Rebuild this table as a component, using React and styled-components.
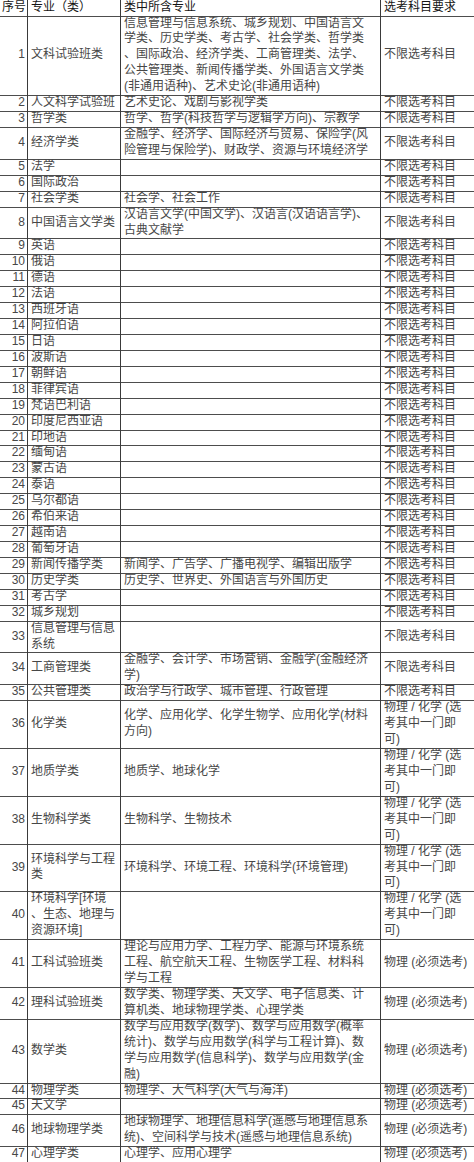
import styled, { createGlobalStyle } from "styled-components";

const LINE = 15.93;

const GlobalStyle = createGlobalStyle`
  html, body {
    margin: 0;
    padding: 0;
    background: #ffffff;
  }
  body {
    font-family: "Liberation Sans", "Noto Sans CJK SC", sans-serif;
    overflow: hidden;
  }
`;

const Sheet = styled.div`
  width: 474px;
  margin-top: -0.4px;
  display: flex;
  flex-direction: column;
`;

const Row = styled.div`
  display: grid;
  grid-template-columns: 28px 93px 260px 1fr;
  height: ${(p) => p.$h}px;
`;

const Cell = styled.div`
  box-sizing: border-box;
  display: flex;
  align-items: center;
  justify-content: ${(p) => (p.$num ? "flex-end" : "flex-start")};
  padding: ${(p) => (p.$num ? "0 2px 0 0" : "0 0 0 3px")};
  border-bottom: 1px solid #4d4d4d;
  border-right: ${(p) => (p.$last ? "none" : "1px solid #3a3a3a")};
  font-size: 12px;
  line-height: ${LINE}px;
  color: ${(p) => (p.$head ? "#151515" : "#474747")};
  white-space: nowrap;
  overflow: visible;
`;

const Text = styled.span`
  display: block;
`;

const ANY = "不限选考科目";
const PC = ["物理 / 化学 (选", "考其中一门即", "可)"];
const PHY = "物理 (必须选考)";

const rows = [
  [1, ["文科试验班类"], [
    "信息管理与信息系统、城乡规划、中国语言文",
    "学类、历史学类、考古学、社会学类、哲学类",
    "、国际政治、经济学类、工商管理类、法学、",
    "公共管理类、新闻传播学类、外国语言文学类",
    "(非通用语种)、艺术史论(非通用语种)",
  ], [ANY], 5],
  [2, ["人文科学试验班"], ["艺术史论、戏剧与影视学类"], [ANY], 1],
  [3, ["哲学类"], ["哲学、哲学(科技哲学与逻辑学方向)、宗教学"], [ANY], 1],
  [4, ["经济学类"], [
    "金融学、经济学、国际经济与贸易、保险学(风",
    "险管理与保险学)、财政学、资源与环境经济学",
  ], [ANY], 2],
  [5, ["法学"], [], [ANY], 1],
  [6, ["国际政治"], [], [ANY], 1],
  [7, ["社会学类"], ["社会学、社会工作"], [ANY], 1],
  [8, ["中国语言文学类"], [
    "汉语言文学(中国文学)、汉语言(汉语语言学)、",
    "古典文献学",
  ], [ANY], 2],
  ...[
    "英语", "俄语", "德语", "法语", "西班牙语", "阿拉伯语", "日语", "波斯语",
    "朝鲜语", "菲律宾语", "梵语巴利语", "印度尼西亚语", "印地语", "缅甸语",
    "蒙古语", "泰语", "乌尔都语", "希伯来语", "越南语", "葡萄牙语",
  ].map((name, i) => [9 + i, [name], [], [ANY], 1]),
  [29, ["新闻传播学类"], ["新闻学、广告学、广播电视学、编辑出版学"], [ANY], 1],
  [30, ["历史学类"], ["历史学、世界史、外国语言与外国历史"], [ANY], 1],
  [31, ["考古学"], [], [ANY], 1],
  [32, ["城乡规划"], [], [ANY], 1],
  [33, ["信息管理与信息", "系统"], [], [ANY], 2],
  [34, ["工商管理类"], ["金融学、会计学、市场营销、金融学(金融经济", "学)"], [ANY], 2],
  [35, ["公共管理类"], ["政治学与行政学、城市管理、行政管理"], [ANY], 1],
  [36, ["化学类"], ["化学、应用化学、化学生物学、应用化学(材料", "方向)"], PC, 3],
  [37, ["地质学类"], ["地质学、地球化学"], PC, 3],
  [38, ["生物科学类"], ["生物科学、生物技术"], PC, 3],
  [39, ["环境科学与工程", "类"], ["环境科学、环境工程、环境科学(环境管理)"], PC, 3],
  [40, ["环境科学[环境", "、生态、地理与", "资源环境]"], [], PC, 3],
  [41, ["工科试验班类"], [
    "理论与应用力学、工程力学、能源与环境系统",
    "工程、航空航天工程、生物医学工程、材料科",
    "学与工程",
  ], [PHY], 3],
  [42, ["理科试验班类"], [
    "数学类、物理学类、天文学、电子信息类、计",
    "算机类、地球物理学类、心理学类",
  ], [PHY], 2],
  [43, ["数学类"], [
    "数学与应用数学(数学)、数学与应用数学(概率",
    "统计)、数学与应用数学(科学与工程计算)、数",
    "学与应用数学(信息科学)、数学与应用数学(金",
    "融)",
  ], [PHY], 4],
  [44, ["物理学类"], ["物理学、大气科学(大气与海洋)"], [PHY], 1],
  [45, ["天文学"], [], [PHY], 1],
  [46, ["地球物理学类"], [
    "地球物理学、地理信息科学(遥感与地理信息系",
    "统)、空间科学与技术(遥感与地理信息系统)",
  ], [PHY], 2],
  [47, ["心理学类"], ["心理学、应用心理学"], [PHY], 1],
];

const Lines = ({ lines }) => (
  <Text>
    {lines.map((l, i) => (
      <span key={i}>
        {i > 0 && <br />}
        {l}
      </span>
    ))}
  </Text>
);

export default function App() {
  return (
    <>
      <GlobalStyle />
      <Sheet>
        <Row $h={15.9}>
          <Cell $head style={{ padding: "0 0 0 2px" }}>序号</Cell>
          <Cell $head>专业（类）</Cell>
          <Cell $head>类中所含专业</Cell>
          <Cell $head $last>选考科目要求</Cell>
        </Row>
        {rows.map(([n, major, subs, req, lines]) => (
          <Row key={n} $h={lines * LINE}>
            <Cell $num>{n}</Cell>
            <Cell><Lines lines={major} /></Cell>
            <Cell><Lines lines={subs} /></Cell>
            <Cell $last><Lines lines={req} /></Cell>
          </Row>
        ))}
      </Sheet>
    </>
  );
}
